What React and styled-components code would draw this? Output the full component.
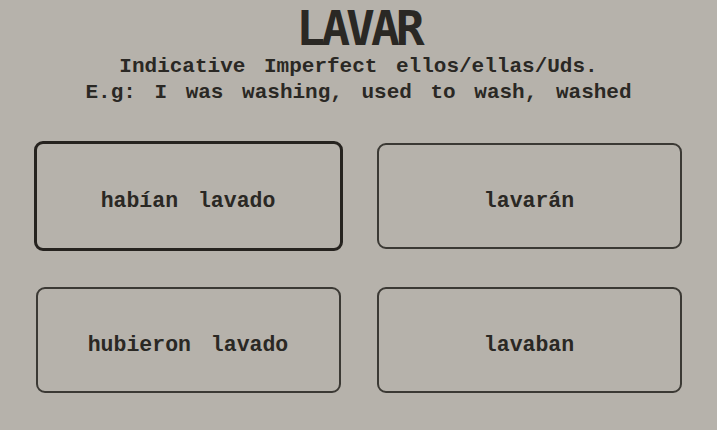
import React from "react";
import styled, { createGlobalStyle } from "styled-components";

const Global = createGlobalStyle`
  html, body { margin: 0; padding: 0; background: #b6b2ab; }
  body { width: 717px; height: 430px; overflow: hidden; }
`;

const Page = styled.div`
  width: 717px;
  height: 430px;
  box-sizing: border-box;
  padding-top: 4px;
  display: flex;
  flex-direction: column;
  align-items: center;
  background: #b6b2ab;
  color: #2a2824;
`;

const Title = styled.h1`
  margin: 0;
  font-family: "DejaVu Sans Mono", monospace;
  font-weight: bold;
  font-size: 48px;
  line-height: 48px;
  letter-spacing: -4px;
  color: #2a2824;
`;

const Subtitle = styled.div`
  margin-top: 2px;
  font-family: "Liberation Mono", monospace;
  font-weight: bold;
  font-size: 21px;
  line-height: 26px;
  word-spacing: 6px;
  text-align: center;
  white-space: nowrap;
`;

const Grid = styled.div`
  margin-top: 37px;
  display: grid;
  grid-template-columns: 305px 305px;
  grid-auto-rows: 106px;
  column-gap: 36px;
  row-gap: 38px;
`;

const Option = styled.button`
  box-sizing: border-box;
  margin: ${(p) => (p.$selected ? "-2px" : "0")};
  border: ${(p) => (p.$selected ? "3px solid #26231f" : "2px solid #3b3934")};
  border-radius: 9px;
  background: transparent;
  padding: 10px 0 0;
  display: flex;
  align-items: center;
  justify-content: center;
  font-family: "Liberation Mono", monospace;
  font-weight: bold;
  font-size: 21.5px;
  word-spacing: 7px;
  color: #2a2824;
  cursor: pointer;
`;

const options = [
  { text: "habían lavado", selected: true },
  { text: "lavarán" },
  { text: "hubieron lavado" },
  { text: "lavaban" },
];

export default function App() {
  return (
    <>
      <Global />
      <Page>
        <Title>LAVAR</Title>
        <Subtitle>
          Indicative Imperfect ellos/ellas/Uds.
          <br />
          E.g: I was washing, used to wash, washed
        </Subtitle>
        <Grid>
          {options.map((o) => (
            <Option key={o.text} $selected={o.selected}>
              {o.text}
            </Option>
          ))}
        </Grid>
      </Page>
    </>
  );
}
